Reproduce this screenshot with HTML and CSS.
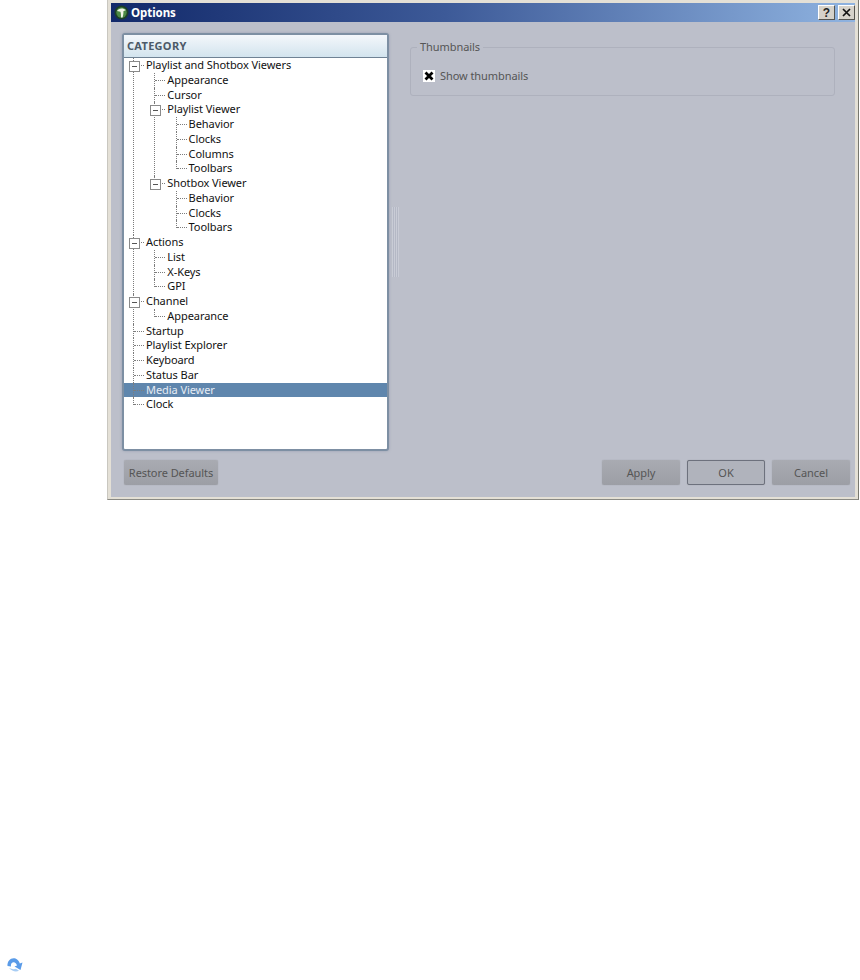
FILE: index.html
```html
<!DOCTYPE html>
<html>
<head>
<meta name="viewport" content="width=device-width, initial-scale=1.0">
<title>Options</title>
<link rel="stylesheet" href="styles.css">
</head>
<body>

<div class="window">
  <div class="title-bar">
    <svg class="app-icon" width="15" height="15" viewBox="0 0 15 15">
      <circle cx="7.5" cy="7.5" r="7" fill="#1c3f28"/>
      <circle cx="7.5" cy="7.5" r="5.2" fill="#4c8a44"/>
      <path d="M3 6 C4.5 3 9 2.5 12 5 L9.4 6.2 C9.6 8 9.2 10 8.6 12.5 L7 12.5 C7 10.5 7 8.5 6.4 6.8 Z" fill="#eef3e4"/>
    </svg>
    <span class="title-text">Options</span>
    <div class="title-buttons">
      <span class="title-btn">?</span>
      <span class="title-btn">
        <svg width="9" height="9" viewBox="0 0 9 9"><path d="M1 1 L8 8 M8 1 L1 8" stroke="#111" stroke-width="1.7"/></svg>
      </span>
    </div>
  </div>

  <div class="dialog">
    <div class="main">
      <div class="category-panel">
        <div class="category-head">CATEGORY</div>
        <ul class="tree">
          <li class="open"><span class="node">Playlist and Shotbox Viewers</span>
            <ul>
              <li><span class="node">Appearance</span></li>
              <li><span class="node">Cursor</span></li>
              <li class="open"><span class="node">Playlist Viewer</span>
                <ul>
                  <li><span class="node">Behavior</span></li>
                  <li><span class="node">Clocks</span></li>
                  <li><span class="node">Columns</span></li>
                  <li><span class="node">Toolbars</span></li>
                </ul>
              </li>
              <li class="open"><span class="node">Shotbox Viewer</span>
                <ul>
                  <li><span class="node">Behavior</span></li>
                  <li><span class="node">Clocks</span></li>
                  <li><span class="node">Toolbars</span></li>
                </ul>
              </li>
            </ul>
          </li>
          <li class="open"><span class="node">Actions</span>
            <ul>
              <li><span class="node">List</span></li>
              <li><span class="node">X-Keys</span></li>
              <li><span class="node">GPI</span></li>
            </ul>
          </li>
          <li class="open"><span class="node">Channel</span>
            <ul>
              <li><span class="node">Appearance</span></li>
            </ul>
          </li>
          <li><span class="node">Startup</span></li>
          <li><span class="node">Playlist Explorer</span></li>
          <li><span class="node">Keyboard</span></li>
          <li><span class="node">Status Bar</span></li>
          <li class="selected"><span class="node">Media Viewer</span></li>
          <li><span class="node">Clock</span></li>
        </ul>
      </div>

      <div class="splitter"><div class="grip"></div></div>

      <div class="settings">
        <fieldset class="group">
          <legend>Thumbnails</legend>
          <div class="check-row">
            <span class="check">
              <svg width="10" height="10" viewBox="0 0 10 10"><path d="M1.5 1.5 L8.5 8.5 M8.5 1.5 L1.5 8.5" stroke="#000" stroke-width="2.8"/></svg>
            </span>
            <span>Show thumbnails</span>
          </div>
        </fieldset>
      </div>
    </div>

    <div class="actions">
      <a class="button restore">Restore Defaults</a>
      <div class="actions-right">
        <a class="button">Apply</a>
        <a class="button default">OK</a>
        <a class="button">Cancel</a>
      </div>
    </div>
  </div>
</div>

<div class="page-foot">
  <svg width="18" height="17" viewBox="0 0 18 17">
    <path d="M1.5 10 C1 4.5 5.5 1 9.5 2.5 C12 3.5 13.3 5.5 13.8 7.5 L16.5 6.5 L14.5 14 L8.5 10.5 L11 9.5 C10.5 7.3 9 6 7.3 6.2 C5.3 6.5 4.6 8.5 5 10.5 Z" fill="#5a9be8"/>
    <path d="M3 12 C6 15.5 10 16 13 14.8 L10 12.8 C8 13.5 5.5 13.2 3 12 Z" fill="#a8cdf4"/>
  </svg>
</div>

</body>
</html>
```
FILE: styles.css
```css
* {box-sizing: border-box;}

body {
  margin: 0;
  background-color: #fff;
  font-family: "Noto Sans", "Open Sans", sans-serif;
  font-size: 11px;
  letter-spacing: -0.07px;
  color: #111;
}

.window {
  margin-left: 107px;
  width: 752px;
  height: 500px;
  padding: 3px 3px 3px 3px;
  background-color: #e4e0d6;
  border-right: 1px solid #77776f;
  border-bottom: 1px solid #8a8a84;
  border-left: 1px solid #c9c7c0;
}

.title-bar {
  display: flex;
  align-items: center;
  height: 19px;
  padding-left: 3px;
  background: linear-gradient(to right, #12296a, #3d5a98 45%, #8fb3e0);
}

.app-icon {
  margin-right: 2px;
}

.title-text {
  color: #fff;
  font-weight: bold;
  font-size: 11.5px;
}

.title-buttons {
  display: flex;
  gap: 3px;
  margin-left: auto;
}

.title-btn {
  display: flex;
  align-items: center;
  justify-content: center;
  width: 17px;
  height: 15px;
  background-color: #d6d2ca;
  border: 1px solid #fff;
  border-right-color: #55544f;
  border-bottom-color: #55544f;
  color: #222;
  font-family: "Liberation Sans", sans-serif;
  font-size: 12px;
  font-weight: bold;
}

.dialog {
  height: 475px;
  padding: 11px 5px 12px 11px;
  background-color: #bcbfca;
}

.main {
  display: flex;
  height: 418px;
}

.category-panel {
  width: 267px;
  background-color: #fff;
  border: 2px solid #7d8fa3;
  border-radius: 3px;
  box-shadow: 0 0 3px #98a0b2;
}

.category-head {
  height: 23px;
  padding-left: 3px;
  line-height: 22px;
  font-size: 11px;
  font-weight: bold;
  color: #4c5a68;
  letter-spacing: 0.3px;
  background: linear-gradient(to bottom, #f4f7fb, #d3e4ee);
  border-bottom: 1px solid #6f8294;
}

.tree,
.tree ul {
  list-style: none;
  margin: 0;
  padding: 0;
}

.tree ul {
  padding-left: 21.3px;
}

.tree li {
  position: relative;
}

.tree .node {
  display: block;
  height: 14.75px;
  padding-left: 22px;
  line-height: 14.75px;
}

/* tree connectors */
.tree li::before {
  content: "";
  position: absolute;
  left: 9px;
  top: 0;
  bottom: 0;
  border-left: 1px dotted #7c7c7c;
}

.tree li:last-child::before {
  bottom: auto;
  height: 8px;
}

.tree .node::before {
  content: "";
  position: absolute;
  left: 10px;
  top: 7px;
  width: 10px;
  border-top: 1px dotted #7c7c7c;
}

/* the minus box on open branches */
.tree .open > .node::after {
  content: "";
  position: absolute;
  left: 5px;
  top: 3px;
  width: 9px;
  height: 9px;
  background: linear-gradient(#555, #555) center / 5px 1px no-repeat #fff;
  border: 1px solid #8a8a8a;
}

.tree .selected .node {
  background-color: #5f86ad;
  color: #e6ecf4;
}

.splitter {
  display: flex;
  justify-content: center;
  align-items: center;
  width: 21px;
  padding-right: 8px;
}

.grip {
  width: 7px;
  height: 70px;
  background: repeating-linear-gradient(to right, #c9ccd6 0, #c9ccd6 1px, #b4b8c5 1px, #b4b8c5 2px);
}

.settings {
  width: 425px;
  padding-top: 7px;
}

.group {
  height: 56px;
  margin: 0;
  padding: 0 12px;
  border: 1px solid #aeb1bd;
  border-radius: 3px;
  color: #555;
}

.group legend {
  margin-left: -6px;
  padding: 0 3px;
  line-height: 14px;
}

.check-row {
  display: flex;
  align-items: center;
  gap: 5px;
  margin-top: 14px;
}

.check {
  display: flex;
  align-items: center;
  justify-content: center;
  width: 12px;
  height: 12px;
  background-color: #fff;
}

.actions {
  display: flex;
  justify-content: space-between;
  margin-top: 9px;
  padding-left: 2px;
}

.actions-right {
  display: flex;
  gap: 7px;
}

.button {
  display: block;
  width: 78px;
  height: 25px;
  line-height: 25px;
  text-align: center;
  color: #555;
  background: linear-gradient(to bottom, #a9abb2, #9c9ea5);
  border-radius: 2px;
  box-shadow: 0 0 1px #8d8f96;
}

.restore {
  width: 94px;
}

.default {
  background: #b0b3bc;
  border: 1px solid #6d717d;
  line-height: 23px;
}

.page-foot {
  height: 480px;
  padding: 456px 0 0 6px;
}
```
